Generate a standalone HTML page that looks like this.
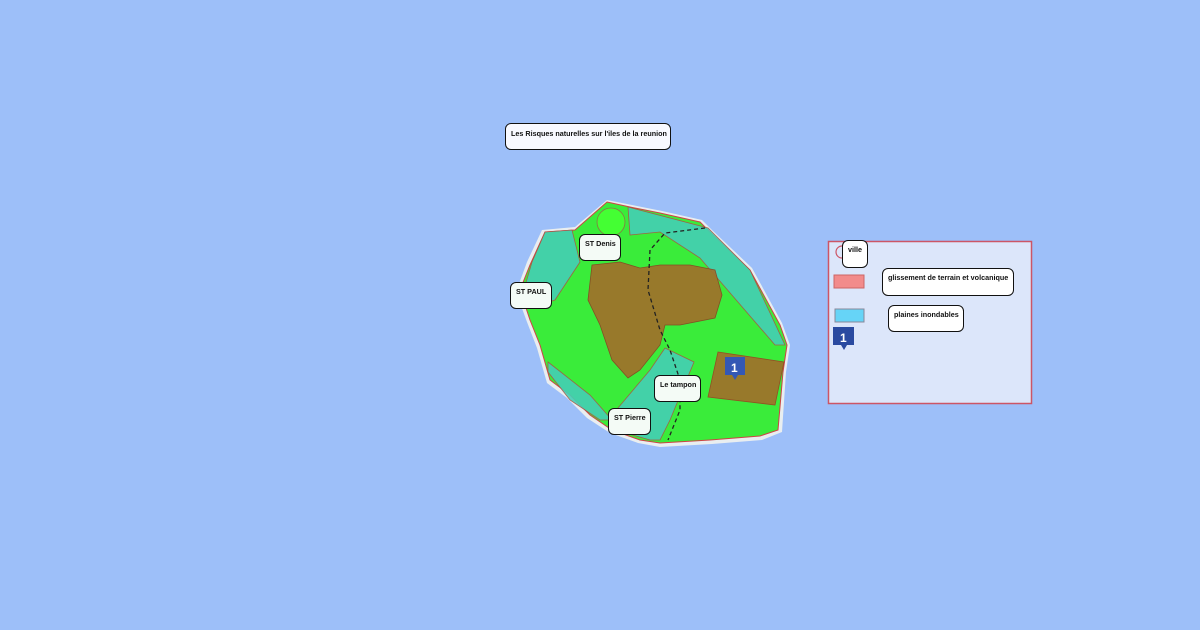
<!DOCTYPE html>
<html><head><meta charset="utf-8">
<style>
html,body{margin:0;padding:0;width:1200px;height:630px;overflow:hidden;background:#9dbff9;font-family:"Liberation Sans",Arial,sans-serif}
.lbl{position:absolute;background:#f4fbf6;border:1.5px solid #111;border-radius:6px;font-size:7.2px;font-weight:bold;color:#111;box-sizing:border-box;padding:4px 5px;white-space:nowrap}
</style></head><body>
<div class="lbl" style="left:505px;top:123px;width:166px;height:27px;background:#f8f9ff;padding:5px 5px">Les Risques naturelles sur l'iles de la reunion</div>

<svg width="1200" height="630" style="position:absolute;left:0;top:0">
<polygon points="607,200 632,205 662,211 702,220 712,230 752,268 782,323 790,345 786,372 782,432 762,440 712,444 660,447 638,443 610,433 587,418 567,398 547,383 537,348 527,322 516,292 527,262 542,230 575,227" fill="#e9eef0"/>
<polygon points="607,202 630,207 660,213 700,222 710,232 750,270 780,325 787,345 783,372 778,430 760,436 710,440 660,443 640,440 612,430 590,415 570,395 550,380 540,345 530,320 520,290 530,265 545,232 575,230" fill="#3aec3a" stroke="#cc4444" stroke-width="1"/>
<circle cx="611" cy="222" r="14" fill="#44ff33" stroke="#887744" stroke-width="0.8"/>
<polygon points="628,207 708,228 750,270 785,345 775,345 700,258 660,232 630,235" fill="#45cfb5" stroke="#aa5544" stroke-width="0.8" opacity="0.9"/>
<polygon points="545,232 572,230 580,262 555,300 540,305 522,296 532,262" fill="#45cfb5" stroke="#aa5544" stroke-width="0.8" opacity="0.9"/>
<polygon points="665,348 694,362 670,420 660,440 650,440 622,432 612,415 650,370" fill="#45cfb5" stroke="#aa5544" stroke-width="0.8" opacity="0.9"/>
<polygon points="548,362 590,395 612,420 600,420 570,400 548,372" fill="#45cfb5" stroke="#aa5544" stroke-width="0.8" opacity="0.9"/>
<polygon points="592,265 620,262 640,268 660,265 690,265 715,270 722,295 715,318 680,325 665,325 660,345 640,370 628,378 612,360 600,325 588,300" fill="#a0702a" stroke="#884422" stroke-width="0.8" opacity="0.92"/>
<polygon points="718,352 784,362 775,405 708,397" fill="#a0702a" stroke="#994422" stroke-width="0.8" opacity="0.92"/>
<path d="M705,228 L665,233 L650,250 L648,290 L660,330 L670,350 L680,380 L680,410 L668,440" fill="none" stroke="#222" stroke-width="1.3" stroke-dasharray="4,3"/>
<rect x="828.5" y="241.5" width="203" height="162" fill="#dce6fa" stroke="#cc5566" stroke-width="1.5"/>
<circle cx="842" cy="252" r="6" fill="none" stroke="#cc5566" stroke-width="1.2"/>
<rect x="834" y="275" width="30" height="13" fill="#f28b8b" stroke="#c66" stroke-width="1"/>
<rect x="835" y="309" width="29" height="13" fill="#66d4f7" stroke="#889" stroke-width="1"/>
<path d="M833,327 h21 v18 h-7 l-3,5 l-3,-5 h-8 z" fill="#2a4aa0"/>
<text x="840" y="342" font-family="Liberation Sans" font-weight="bold" font-size="12" fill="#fff">1</text>
<path d="M725,357 h20 v18 h-7 l-3,5 l-3,-5 h-7 z" fill="#3458b5"/>
<text x="731" y="372" font-family="Liberation Sans" font-weight="bold" font-size="12" fill="#fff">1</text>
</svg>

<div class="lbl" style="left:579px;top:234px;width:42px;height:27px">ST Denis</div>
<div class="lbl" style="left:510px;top:282px;width:42px;height:27px">ST PAUL</div>
<div class="lbl" style="left:654px;top:375px;width:47px;height:27px">Le tampon</div>
<div class="lbl" style="left:608px;top:408px;width:43px;height:27px">ST Pierre</div>
<div class="lbl" style="left:842px;top:240px;width:26px;height:28px;background:#fff;padding:4px 5px">ville</div>
<div class="lbl" style="left:882px;top:268px;width:132px;height:28px;background:#fff">glissement de terrain et volcanique</div>
<div class="lbl" style="left:888px;top:305px;width:76px;height:27px;background:#fff">plaines inondables</div>
</body></html>
